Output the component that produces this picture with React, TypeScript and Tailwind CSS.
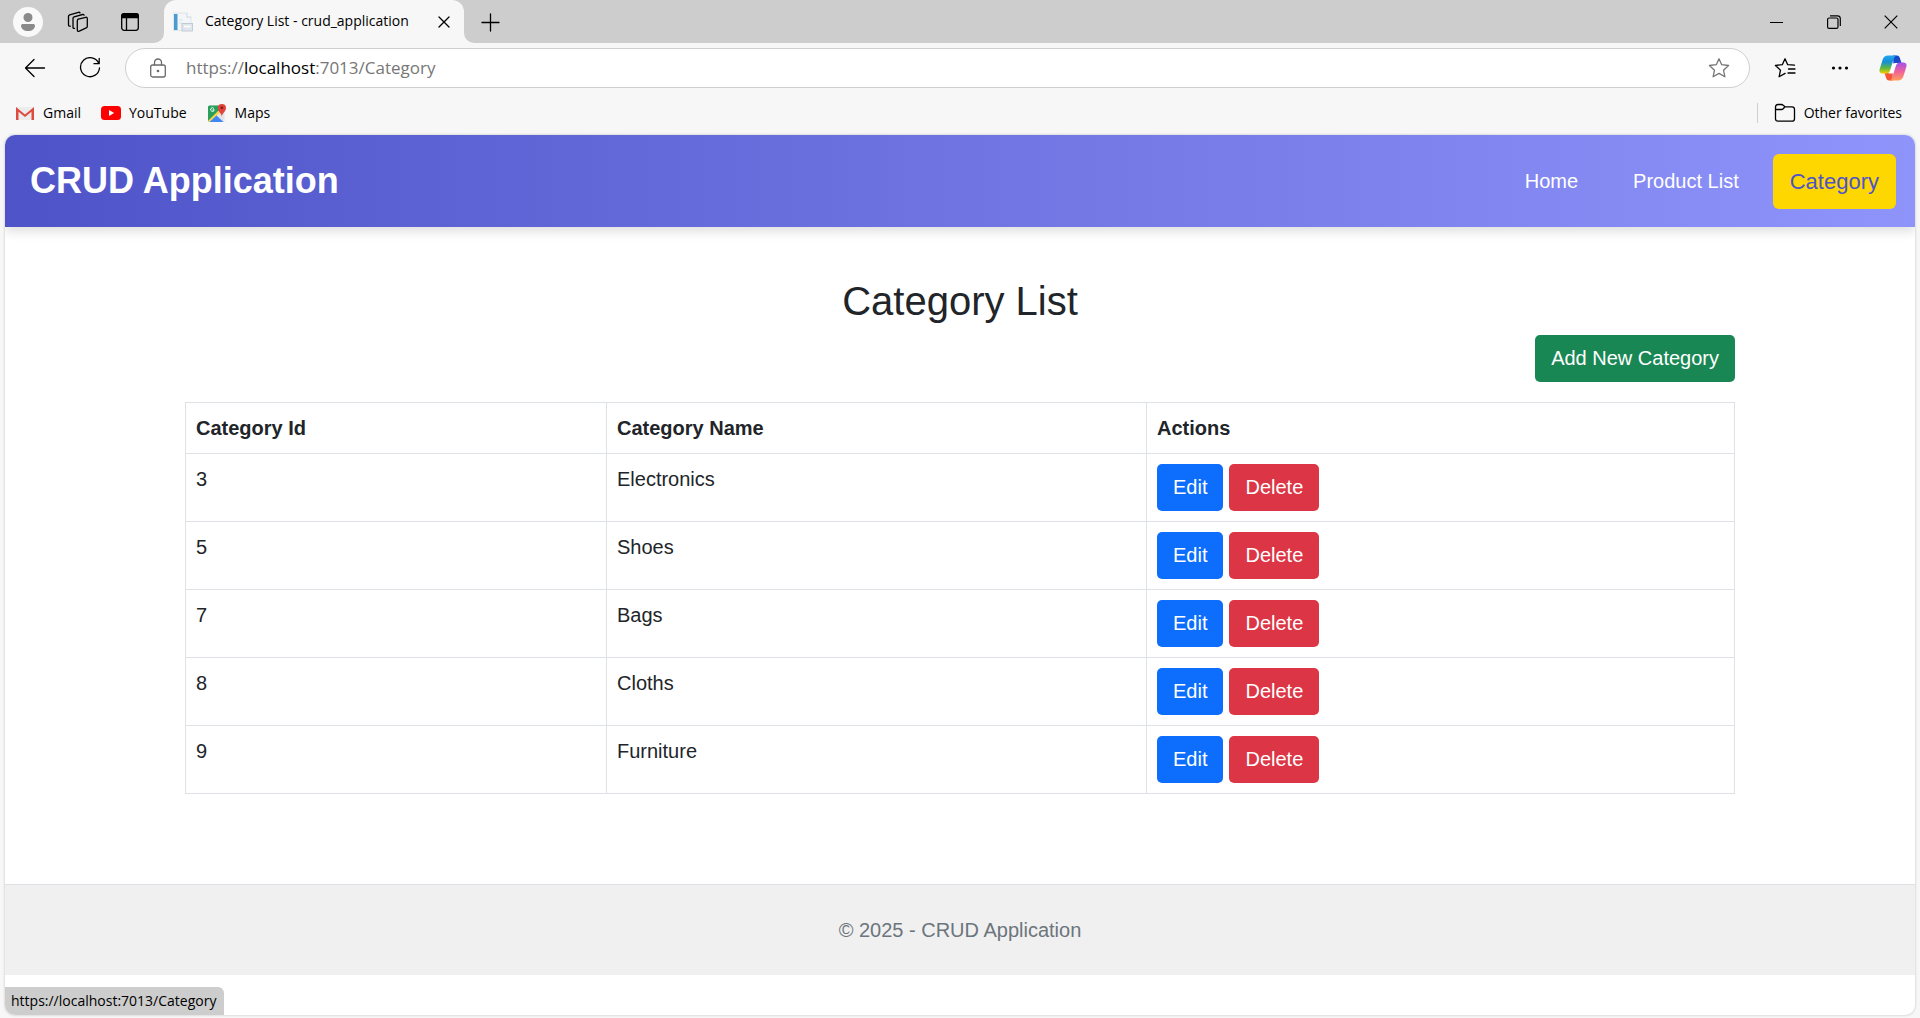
import React from "react";

const categories = [
  { id: 3, name: "Electronics" },
  { id: 5, name: "Shoes" },
  { id: 7, name: "Bags" },
  { id: 8, name: "Cloths" },
  { id: 9, name: "Furniture" },
];

const line = {
  fill: "none",
  stroke: "currentColor",
  strokeWidth: 1.3,
  strokeLinecap: "round" as const,
  strokeLinejoin: "round" as const,
};

function ProfileIcon() {
  return (
    <svg className="size-[30px]" viewBox="0 0 30 30">
      <circle cx="15" cy="15" r="15" fill="#f9f9f9" />
      <circle cx="15" cy="10.5" r="4.5" fill="#8a8a8a" />
      <path d="M8 18.5q0-1.5 1.5-1.500h11q1.500 0 1.500 1.500c0 3.500-3 5.500-7 5.500s-7-2-7-5.500z" fill="#8a8a8a" />
    </svg>
  );
}

function WorkspacesIcon() {
  return (
    <svg className="size-[22px]" viewBox="0 0 22 22" {...line}>
      <path d="M11.200 8.200l7.500-1.900q1.600-.3 1.600 1.200v7.700q0 1.200-1.100 1.700l-6.900 3.200q-2 .7-2-1.200V10q0-1.400.9-1.800z" />
      <path d="M7.500 17.400q-1.500.2-1.500-1.200V7.500q0-1.300 1.100-1.700l8.500-2.300q1-.2 1.500.6" />
      <path d="M3.300 15.200q-1.800.1-1.800-1.400V5.500q0-1.300 1.200-1.700l8.700-2.500q1.200-.2 1.600.6" />
    </svg>
  );
}

function TabActionsIcon() {
  return (
    <svg className="size-[20px]" viewBox="0 0 20 20" {...line}>
      <rect x="1.700" y="1.700" width="16.600" height="16.600" rx="2.500" />
      <path d="M1.700 5.500V4q0-2.300 2.300-2.300h12q2.300 0 2.300 2.300v1.500z" fill="currentColor" />
      <path d="M6.500 6v12" />
    </svg>
  );
}

function PageIcon() {
  return (
    <svg className="size-[20px]" viewBox="0 0 20 20">
      <path d="M.5 1H14l4 4v13.500H.5z" fill="#f3f6f9" stroke="#dbe1e7" strokeWidth=".8" />
      <rect x="1" y="2" width="3.500" height="16" fill="#4b9ad0" />
      <path d="M14 1v4h4" fill="#fff" stroke="#c3ccd6" strokeWidth=".8" />
      <path d="M6 8h4M6 11h3" stroke="#dbe3ea" />
      <rect x="9" y="11.500" width="10.500" height="7.500" fill="#e1e6ec" stroke="#b9c2cc" strokeWidth=".8" />
      <path d="M11 14.500h6.500" stroke="#fff" strokeWidth="1.500" />
    </svg>
  );
}

function BackIcon() {
  return (
    <svg className="size-[22px]" viewBox="0 0 22 22" {...line}>
      <path d="M20.500 11H1.500M10 2.500L1.500 11l8.500 8.500" />
    </svg>
  );
}

function ReloadIcon() {
  return (
    <svg className="size-[22px]" viewBox="0 0 22 22" {...line}>
      <path d="M19.800 6.500A9.500 9.500 0 1 0 20.500 11M20.200 1.500v5.200H15" />
    </svg>
  );
}

function LockIcon() {
  return (
    <svg className="size-[20px] text-[#6b6b6b]" viewBox="0 0 20 20" {...line}>
      <rect x="2.700" y="7" width="14.600" height="12" rx="2" />
      <path d="M6.500 7V4.500a3.500 3.500 0 0 1 7 0V7" />
      <circle cx="10" cy="13" r=".7" fill="currentColor" />
    </svg>
  );
}

function StarIcon() {
  return (
    <svg className="size-[22px] text-[#767676]" viewBox="0 0 22 22" {...line}>
      <path d="M11 1.800l2.700 5.900 6.900.8-5.100 4.700 1.400 6.600L11 16.400l-5.900 3.400 1.400-6.600L1.400 8.500l6.900-.8z" />
    </svg>
  );
}

function FavoritesIcon() {
  return (
    <svg className="size-[22px]" viewBox="0 0 22 22" strokeWidth="1.400" {...line}>
      <path d="M20.500 8.200l-6.800-.5L11 1.800 8.300 7.700l-6.900.8 5.100 4.700-1.400 6.600 6-3.400M14.500 12h6.500M14 16h7" />
    </svg>
  );
}

function CopilotIcon() {
  return (
    <svg className="size-[28px]" viewBox="0 0 28 28">
      <defs>
        <linearGradient id="cpLeft" x1="0" y1="0" x2="0" y2="1">
          <stop offset="0" stopColor="#25a5f0" />
          <stop offset=".35" stopColor="#148fd8" />
          <stop offset=".7" stopColor="#5fb83f" />
          <stop offset="1" stopColor="#f5d000" />
        </linearGradient>
        <linearGradient id="cpRight" x1="0" y1="0" x2="0" y2="1">
          <stop offset="0" stopColor="#a350f0" />
          <stop offset=".5" stopColor="#f0609a" />
          <stop offset="1" stopColor="#ff9f5a" />
        </linearGradient>
      </defs>
      <path d="M14 1.500h4q2 0 2.700 2L22.500 9h-4q-3 0-4 3z" fill="#1c49c8" />
      <path d="M14 26.500h-4q-2 0-2.700-2L5.500 19h4q3 0 4-3z" fill="#f4553a" />
      <path d="M9 1.500h9q-2.200 0-3 2.500l-4 12.500q-.9 3-3.500 3H4Q-.5 19.500.7 15L3.700 5.500Q5 1.500 9 1.500z" fill="url(#cpLeft)" />
      <path d="M19 26.500h-9q2.200 0 3-2.500l4-12.500q.9-3 3.500-3H24q4.500 0 3.300 4.500l-3 9.500q-1.300 4-5.300 4z" fill="url(#cpRight)" />
      <path d="M16 9h2.800q-1.600.6-2.200 2.500L14.500 18q-.6 1.500-2 1.500H9.200q1.500-.6 2.100-2.500l2-6q.6-2 2.700-2z" fill="#fff" />
    </svg>
  );
}

function GmailIcon() {
  return (
    <svg className="size-[20px]" viewBox="0 0 20 20">
      <path d="M1 4h18v13H1z" fill="#ececec" />
      <path d="M1 17V4l9 7.500L19 4v13h-2.500V8.700L10 14 3.500 8.700V17z" fill="#dd4b3e" />
    </svg>
  );
}

function YouTubeIcon() {
  return (
    <svg className="size-[20px]" viewBox="0 0 20 20">
      <rect y="3" width="20" height="14" rx="3.500" fill="#f00" />
      <path d="M8 7l5.200 3L8 13z" fill="#fff" />
    </svg>
  );
}

function MapsIcon() {
  return (
    <svg className="size-[20px]" viewBox="0 0 20 20">
      <rect x="1" y="2.500" width="16.500" height="16.500" rx="1.500" fill="#e4e4e4" />
      <path d="M1 4q0-1.500 1.500-1.500H13v5L1.500 18.500Q1 18 1 17.500z" fill="#26a05a" />
      <path d="M11.500 7.500L1.200 17.800l1.500 1.500L13.500 9z" fill="#fbd44b" />
      <path d="M9.500 12.500L16.500 19h-14z" fill="#4285f4" />
      <path d="M6.800 5.400A1.800 1.800 0 1 0 7.200 6.800H5.500" fill="none" stroke="#fff" />
      <path d="M14.800 14c0-4-4-5-4-9a4 4 0 0 1 8.200 0c0 4-4.200 5-4.200 9z" fill="#e0443a" />
      <circle cx="14.900" cy="4.800" r="1.400" fill="#7d1f19" />
    </svg>
  );
}

function FolderIcon() {
  return (
    <svg className="size-[22px]" viewBox="0 0 22 22" {...line}>
      <path d="M1.500 5q0-2.500 2.500-2.500h3.500q1 0 1.700.7L11 4.800h7q2.500 0 2.500 2.500v9.400q0 2.500-2.500 2.500H4q-2.500 0-2.500-2.500zM1.500 7.500h6q1 0 1.700-.8L11 4.800" />
    </svg>
  );
}

function TitleBar() {
  return (
    <div className="flex h-[43px] items-stretch bg-[#cdcdcd]">
      <div className="flex w-[164px] items-center pl-[13px]">
        <button aria-label="Profile"><ProfileIcon /></button>
        <button aria-label="Workspaces" className="ml-6"><WorkspacesIcon /></button>
        <button aria-label="Tab actions" className="ml-[31px]"><TabActionsIcon /></button>
      </div>
      <div className="relative flex w-[300px] items-center rounded-t-xl bg-[#f7f7f7] pr-[13px] pl-[9px]">
        <svg className="absolute bottom-0 -left-[10px] size-[10px]" viewBox="0 0 10 10"><path d="M10 0v10H0A10 10 0 0 0 10 0z" fill="#f7f7f7" /></svg>
        <svg className="absolute -right-[10px] bottom-0 size-[10px]" viewBox="0 0 10 10"><path d="M0 0v10h10A10 10 0 0 1 0 0z" fill="#f7f7f7" /></svg>
        <PageIcon />
        <span className="ml-3 flex-1 pb-0.5 text-sm whitespace-nowrap">Category List - crud_application</span>
        <button aria-label="Close tab">
          <svg className="size-[14px]" viewBox="0 0 14 14" {...line}><path d="M2 2l10 10M12 2L2 12" /></svg>
        </button>
      </div>
      <button aria-label="New tab" className="ml-4">
        <svg className="size-[20px]" viewBox="0 0 20 20" {...line}><path d="M10.500 2v17M2 10.500h17" /></svg>
      </button>
      <div className="ml-auto flex">
        <button aria-label="Minimize" className="grid w-[58px] place-items-center">
          <svg className="size-[14px]" viewBox="0 0 14 14" stroke="currentColor"><path d="M1 7.500h13" /></svg>
        </button>
        <button aria-label="Restore" className="grid w-[57px] place-items-center">
          <svg className="size-[14px]" viewBox="0 0 14 14" fill="none" stroke="currentColor" strokeWidth="1.200">
            <rect x=".6" y="3" width="10.400" height="10.400" rx="1.500" />
            <path d="M3 .8h7.500q2.800 0 2.800 2.800V11" />
          </svg>
        </button>
        <button aria-label="Close window" className="grid w-[58px] place-items-center">
          <svg className="size-[14px]" viewBox="0 0 14 14" stroke="currentColor" strokeWidth="1.200"><path d="M.7.7l12.600 12.600M13.300.7L.7 13.300" /></svg>
        </button>
      </div>
    </div>
  );
}

function AddressBar() {
  return (
    <div className="flex h-[50px] items-center pl-6">
      <button aria-label="Back"><BackIcon /></button>
      <button aria-label="Refresh" className="ml-[33px]"><ReloadIcon /></button>
      <div className="ml-6 flex h-10 flex-1 items-center rounded-full border border-[#cfcfcf] bg-white pr-[19px] pl-[22px]">
        <LockIcon />
        <div className="ml-[18px] flex-1 text-[17px] text-[#767676]">
          https://<span className="text-black">localhost</span>:7013/Category
        </div>
        <button aria-label="Add to favorites"><StarIcon /></button>
      </div>
      <button aria-label="Favorites" className="ml-6"><FavoritesIcon /></button>
      <button aria-label="Settings and more" className="ml-[35px]">
        <svg className="size-[18px]" viewBox="0 0 18 18" fill="currentColor"><circle cx="2.500" cy="9" r="1.600" /><circle cx="9" cy="9" r="1.600" /><circle cx="15.500" cy="9" r="1.600" /></svg>
      </button>
      <button aria-label="Copilot" className="mr-[13px] ml-[30px]"><CopilotIcon /></button>
    </div>
  );
}

function FavoritesBar() {
  return (
    <div className="flex h-[42px] items-center pr-[18px] pb-0.5 pl-[15px] text-sm">
      <a href="#gmail" className="flex items-center gap-2"><GmailIcon />Gmail</a>
      <a href="#youtube" className="ml-5 flex items-center gap-2"><YouTubeIcon />YouTube</a>
      <a href="#maps" className="ml-5 flex items-center gap-2"><MapsIcon />Maps</a>
      <button className="ml-auto flex items-center gap-2 before:mr-2 before:h-5 before:w-px before:bg-[#cfcfcf]">
        <FolderIcon />Other favorites
      </button>
    </div>
  );
}

export default function App() {
  return (
    <div className="flex min-h-screen flex-col bg-[#f7f7f7] font-['Open_Sans','Noto_Sans',sans-serif] text-black">
      <TitleBar />
      <AddressBar />
      <FavoritesBar />
      <div className="relative mx-[5px] mb-[3px] flex flex-1 flex-col overflow-hidden rounded-[10px] bg-white font-['Liberation_Sans',Arial,sans-serif] text-xl leading-[30px] text-[#212529] shadow-[0_0_2px_1px_#dedede]">
        <header className="flex h-[92px] items-center justify-between bg-linear-[90deg,#4e54c8,#8f94fb] pr-[19px] pl-[25px] text-white shadow-[0_5px_10px_rgba(0,0,0,0.12)]">
          <a href="#home" className="text-4xl font-bold">CRUD Application</a>
          <nav className="flex items-center">
            <a href="#home" className="mr-[55px]">Home</a>
            <a href="#products" className="mr-[34px]">Product List</a>
            <a href="#category" className="rounded-md bg-[#ffd700] px-[17px] py-[13px] text-[22px] leading-[29px] text-[#4e54c8]">Category</a>
          </nav>
        </header>
        <main className="mx-auto w-full max-w-[1600px] px-[25px] pt-[50px] pb-[90px]">
          <h1 className="text-center text-[40px] leading-[48px] font-normal">Category List</h1>
          <div className="mt-[10px] flex justify-end">
            <button className="h-[47px] rounded-[5px] bg-[#198754] px-4 pb-0.5 text-white">Add New Category</button>
          </div>
          <table className="mt-5 w-full table-fixed border-collapse text-left [&_td]:border [&_td]:border-[#dee2e6] [&_td]:p-[10px] [&_td]:align-top [&_th]:border [&_th]:border-[#dee2e6] [&_th]:p-[10px]">
            <thead>
              <tr>
                <th className="w-[421px]">Category Id</th>
                <th className="w-[540px]">Category Name</th>
                <th>Actions</th>
              </tr>
            </thead>
            <tbody>
              {categories.map((c) => (
                <tr key={c.id}>
                  <td>{c.id}</td>
                  <td>{c.name}</td>
                  <td>
                    <div className="flex gap-[6px] text-white">
                      <button className="h-[47px] rounded-[5px] bg-[#0d6efd] px-4 pb-0.5">Edit</button>
                      <button className="h-[47px] rounded-[5px] bg-[#dc3545] px-4 pb-0.5">Delete</button>
                    </div>
                  </td>
                </tr>
              ))}
            </tbody>
          </table>
        </main>
        <footer className="border-t border-[#dee2e6] bg-[#f0f0f0] py-[30px] text-center text-[#6c757d]">
          © 2025 - CRUD Application
        </footer>
        <div className="absolute bottom-0 left-0 h-7 rounded-tr-md bg-[#cdcdcd] pr-2 pl-[6px] font-['Open_Sans','Noto_Sans',sans-serif] text-sm leading-7 text-black">
          https://localhost:7013/Category
        </div>
      </div>
    </div>
  );
}
